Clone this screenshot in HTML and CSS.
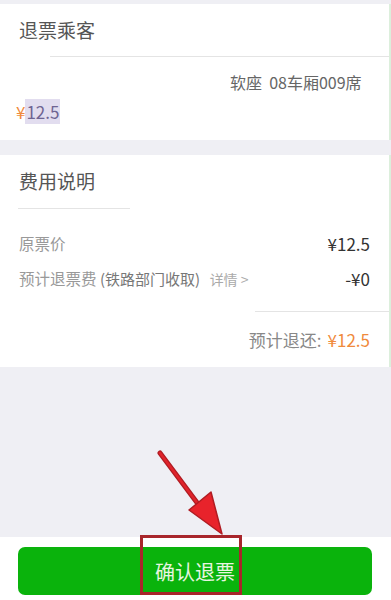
FILE: index.html
```html
<!DOCTYPE html>
<html lang="zh-CN">
<head>
  <meta charset="UTF-8">
  <meta name="viewport" content="width=device-width, initial-scale=1.0">
  <title>退票</title>
  <link rel="stylesheet" href="styles.css">
</head>
<body>
  <div class="page">
    <div class="card">
      <div class="card-title">退票乘客</div>
      <div class="line line-passenger"></div>
      <div class="passenger">
        <div class="seat">软座&nbsp;&nbsp;08车厢009席</div>
        <div class="ticket-price"><span class="yen">¥</span><span class="amount">12.5</span></div>
      </div>
    </div>

    <div class="card card-fee">
      <div class="card-title">费用说明</div>
      <div class="line line-fee"></div>
      <div class="fee-list">
        <div class="fee-row">
          <span class="label">原票价</span>
          <span class="value">¥12.5</span>
        </div>
        <div class="fee-row">
          <span class="label">预计退票费 <span class="note">(铁路部门收取)</span> <span class="detail">详情 &gt;</span></span>
          <span class="value">-¥0</span>
        </div>
      </div>
      <div class="line line-total"></div>
      <div class="total-row">
        <span class="label">预计退还:</span>
        <span class="total">¥12.5</span>
      </div>
    </div>

    <div class="spacer"></div>

    <div class="footer">
      <button class="confirm">确认退票</button>
    </div>

    <svg class="mark" width="391" height="600" viewBox="0 0 391 600">
      <line x1="160" y1="453" x2="204" y2="512" stroke="#b01c22" stroke-width="5" stroke-linecap="round"/>
      <line x1="160" y1="453" x2="204" y2="512" stroke="#e0232b" stroke-width="2.5" stroke-linecap="round"/>
      <polygon points="222,534 189,510 211,492" fill="#e8232b" stroke="#b01c22" stroke-width="1.5" stroke-linejoin="round"/>
      <rect x="141.5" y="536.5" width="99" height="57" fill="none" stroke="#a8262b" stroke-width="3"/>
    </svg>
  </div>
</body>
</html>
```

FILE: styles.css
```css
* { box-sizing: border-box; }
body { margin: 0; background-color: #efeff4; font-family: "Noto Sans CJK SC", "Liberation Sans", sans-serif; }
.page { position: relative; display: flex; flex-direction: column; width: 391px; height: 600px; padding-top: 4px; overflow: hidden; }

.card { background-color: white; border-right: 2px solid #dcefdc; }
.card-fee { margin-top: 15px; }
.card-title { height: 52px; line-height: 52px; padding-left: 19px; font-size: 19px; color: #555; }
.line { height: 1px; background-color: #e4e4e4; }
.line-passenger { margin-left: 50px; }
.line-fee { margin-left: 18px; width: 112px; margin-top: 1px; }
.line-total { margin-left: 255px; margin-top: 15px; }

.passenger { padding: 14px 0 17px 16px; }
.passenger .seat { height: 22px; line-height: 22px; padding-left: 214px; font-size: 16px; color: #666; white-space: nowrap; }
.passenger .ticket-price { margin-top: 8px; height: 22px; line-height: 22px; font-size: 17px; }
.ticket-price .yen { color: #f08a3c; }
.ticket-price .amount { color: #6f6492; background-color: #e2ddef; padding: 0 1px; }

.fee-list { padding: 17px 19px 0 19px; }
.fee-row { display: flex; justify-content: space-between; height: 35px; line-height: 35px; }
.fee-row .label { font-size: 15.5px; color: #999; }
.fee-row .note { font-size: 15px; color: #777; }
.fee-row .detail { font-size: 14px; color: #aaa; margin-left: 6px; }
.fee-row .value { font-size: 17px; color: #333; }

.total-row { display: flex; justify-content: flex-end; align-items: center; height: 55px; padding-right: 19px; font-size: 17px; }
.total-row .label { color: #888; margin-right: 6px; }
.total-row .total { color: #f08a3c; }

.spacer { flex: 1; }

.footer { background-color: white; padding: 10px 19px 5px 18px; }
.confirm { display: block; width: 100%; height: 48px; border: none; border-radius: 7px; background-color: #0ab30c; color: #e8f5e0; font-family: inherit; font-size: 20px; }

.mark { position: absolute; top: 0; left: 0; pointer-events: none; }
```
